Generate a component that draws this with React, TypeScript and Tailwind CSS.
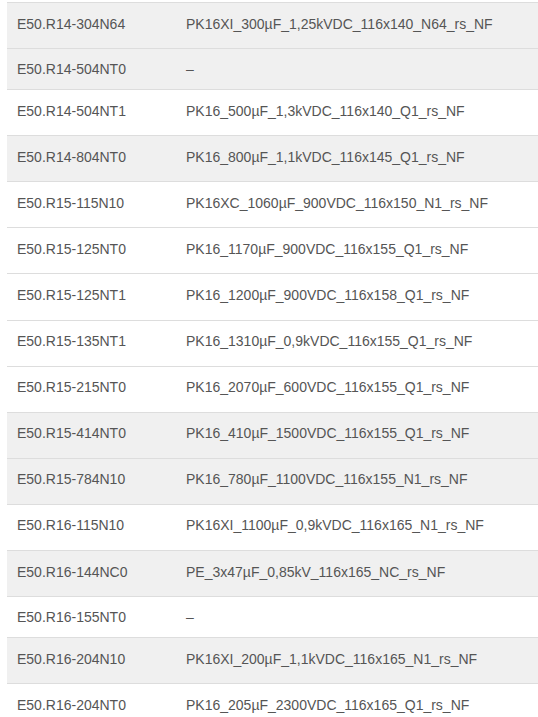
const rows: { code: string; desc: string; shaded: boolean }[] = [
  { code: 'E50.R14-304N64', desc: 'PK16XI_300µF_1,25kVDC_116x140_N64_rs_NF', shaded: true },
  { code: 'E50.R14-504NT0', desc: '–', shaded: true },
  { code: 'E50.R14-504NT1', desc: 'PK16_500µF_1,3kVDC_116x140_Q1_rs_NF', shaded: false },
  { code: 'E50.R14-804NT0', desc: 'PK16_800µF_1,1kVDC_116x145_Q1_rs_NF', shaded: true },
  { code: 'E50.R15-115N10', desc: 'PK16XC_1060µF_900VDC_116x150_N1_rs_NF', shaded: false },
  { code: 'E50.R15-125NT0', desc: 'PK16_1170µF_900VDC_116x155_Q1_rs_NF', shaded: false },
  { code: 'E50.R15-125NT1', desc: 'PK16_1200µF_900VDC_116x158_Q1_rs_NF', shaded: false },
  { code: 'E50.R15-135NT1', desc: 'PK16_1310µF_0,9kVDC_116x155_Q1_rs_NF', shaded: false },
  { code: 'E50.R15-215NT0', desc: 'PK16_2070µF_600VDC_116x155_Q1_rs_NF', shaded: false },
  { code: 'E50.R15-414NT0', desc: 'PK16_410µF_1500VDC_116x155_Q1_rs_NF', shaded: true },
  { code: 'E50.R15-784N10', desc: 'PK16_780µF_1100VDC_116x155_N1_rs_NF', shaded: true },
  { code: 'E50.R16-115N10', desc: 'PK16XI_1100µF_0,9kVDC_116x165_N1_rs_NF', shaded: false },
  { code: 'E50.R16-144NC0', desc: 'PE_3x47µF_0,85kV_116x165_NC_rs_NF', shaded: true },
  { code: 'E50.R16-155NT0', desc: '–', shaded: false },
  { code: 'E50.R16-204N10', desc: 'PK16XI_200µF_1,1kVDC_116x165_N1_rs_NF', shaded: true },
  { code: 'E50.R16-204NT0', desc: 'PK16_205µF_2300VDC_116x165_Q1_rs_NF', shaded: false },
];

export default function App() {
  return (
    <div className="bg-white pt-[2px] pl-[7px] h-[717px] overflow-hidden font-['Liberation_Sans',Arial,sans-serif] text-[14px] text-[#555]">
      <div className="w-[531px]">
        {rows.map((row) => {
          const empty = row.desc === '–';
          return (
            <div
              key={row.code}
              className={`flex border-t border-[#dddddd] ${row.shaded ? 'bg-[#f0f0f0]' : 'bg-white'} ${
                empty ? 'h-[41px] pt-[9.5px]' : 'h-[46.1px] pt-[10.5px]'
              }`}
            >
              <div className="w-[169px] shrink-0 px-[10px] leading-[20px] whitespace-nowrap">{row.code}</div>
              <div className="flex-1 px-[10px] leading-[20px] whitespace-nowrap">{row.desc}</div>
            </div>
          );
        })}
      </div>
    </div>
  );
}
